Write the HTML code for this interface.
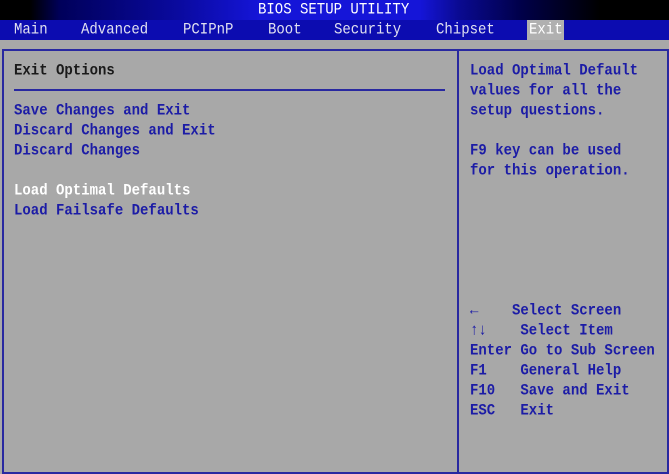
<!DOCTYPE html><html><head><style>
body{margin:0;width:669px;height:474px;background:#a8a8a8;overflow:hidden;position:relative;font-family:"Liberation Mono",monospace;font-size:14px;font-weight:bold}
.t{position:absolute;white-space:pre;line-height:20px;height:20px;transform:translateY(1px) scaleY(1.15);transform-origin:0 50%}
.b{color:#1c1ca6}
</style></head><body>
<div style="position:absolute;left:0;top:0;width:669px;height:20px;background:linear-gradient(90deg,#000 0,#000 30px,#00005a 60px,#0a0aa0 180px,#1515d8 260px,#1515d8 420px,#0a0a90 460px,#00004a 520px,#000 600px)"></div>
<div class="t" style="left:258px;top:-1px;color:#fff;font-weight:normal">BIOS SETUP UTILITY</div>
<div style="position:absolute;left:0;top:20px;width:669px;height:20px;background:#0c0cb0"></div>
<div style="position:absolute;left:527px;top:20px;width:37px;height:20px;background:#b0b0b0"></div>
<div class="t" style="left:14px;top:19px;color:#e0e0f0;font-weight:normal">Main</div>
<div class="t" style="left:81px;top:19px;color:#e0e0f0;font-weight:normal">Advanced</div>
<div class="t" style="left:183px;top:19px;color:#e0e0f0;font-weight:normal">PCIPnP</div>
<div class="t" style="left:268px;top:19px;color:#e0e0f0;font-weight:normal">Boot</div>
<div class="t" style="left:334px;top:19px;color:#e0e0f0;font-weight:normal">Security</div>
<div class="t" style="left:436px;top:19px;color:#e0e0f0;font-weight:normal">Chipset</div>
<div class="t" style="left:529px;top:19px;color:#fff;font-weight:normal">Exit</div>
<div style="position:absolute;left:2px;top:49px;width:663px;height:421px;border:2px solid #2828a0"></div>
<div style="position:absolute;left:457px;top:49px;width:2px;height:423px;background:#2828a0"></div>
<div style="position:absolute;left:14px;top:89px;width:431px;height:2px;background:#2828a0"></div>
<div class="t" style="left:14px;top:60px;color:#1a1a1a">Exit Options</div>
<div class="t b" style="left:14px;top:100px">Save Changes and Exit</div>
<div class="t b" style="left:14px;top:120px">Discard Changes and Exit</div>
<div class="t b" style="left:14px;top:140px">Discard Changes</div>
<div class="t" style="left:14px;top:180px;color:#fff">Load Optimal Defaults</div>
<div class="t b" style="left:14px;top:200px">Load Failsafe Defaults</div>
<div class="t b" style="left:470px;top:60px">Load Optimal Default</div>
<div class="t b" style="left:470px;top:80px">values for all the</div>
<div class="t b" style="left:470px;top:100px">setup questions.</div>
<div class="t b" style="left:470px;top:140px">F9 key can be used</div>
<div class="t b" style="left:470px;top:160px">for this operation.</div>
<div class="t b" style="left:470px;top:300px">←    Select Screen</div>
<div class="t b" style="left:470px;top:320px">↑↓    Select Item</div>
<div class="t b" style="left:470px;top:340px">Enter Go to Sub Screen</div>
<div class="t b" style="left:470px;top:360px">F1    General Help</div>
<div class="t b" style="left:470px;top:380px">F10   Save and Exit</div>
<div class="t b" style="left:470px;top:400px">ESC   Exit</div>
</body></html>
